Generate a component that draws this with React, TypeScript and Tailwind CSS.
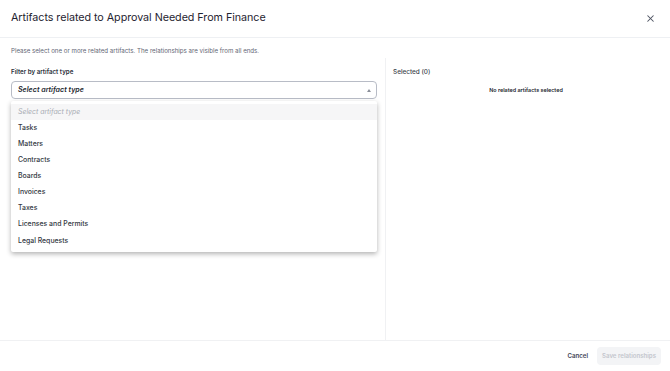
import { X } from 'lucide-react';

const artifactTypes = [
  'Tasks',
  'Matters',
  'Contracts',
  'Boards',
  'Invoices',
  'Taxes',
  'Licenses and Permits',
  'Legal Requests',
];

const App = () => {
  return (
    <div className="h-screen w-full flex flex-col bg-white text-[#1f2937] font-['Inter',sans-serif]">
      {/* Header */}
      <div className="h-[38px] flex items-center justify-between pl-[11px] pr-[14px] border-b border-[#eef0f3]">
        <h1 className="text-[10.75px] font-normal tracking-[-0.05px] text-[#1f2430]">
          Artifacts related to Approval Needed From Finance
        </h1>
        <X className="w-[11px] h-[11px] text-[#4b5160]" strokeWidth={2.2} />
      </div>

      {/* Body */}
      <div className="flex-1 flex flex-col min-h-0">
        <p className="pl-[11px] pt-[9px] pb-[3px] text-[6.15px] leading-[8px] text-[#5f6675]">
          Please select one or more related artifacts. The relationships are visible from all ends.
        </p>

        <div className="flex-1 flex min-h-0">
          {/* Left column */}
          <div className="w-[386px] pl-[11px] pr-[8px] pt-[10px] border-r border-[#f0f1f3]">
            <div className="text-[6.2px] leading-[8px] font-semibold text-[#2b303b] mb-[5px]">
              Filter by artifact type
            </div>
            <div className="relative">
              <div className="h-[18px] flex items-center justify-between pl-[6px] pr-[5px] border border-[#b8bcc6] rounded-[4px]">
                <span className="text-[7.1px] italic font-semibold text-[#23272f]">Select artifact type</span>
                <svg width="4" height="3" viewBox="0 0 4 3">
                  <path d="M0 3 L2 0 L4 3 Z" fill="#8a8f99" />
                </svg>
              </div>

              {/* Dropdown menu */}
              <div className="absolute left-0 right-0 top-[20px] bg-white shadow-[0_2px_5px_rgba(0,0,0,0.3)] rounded-[2px] pt-[3px] pb-[3px] z-10">
                <div className="h-[16px] flex items-center px-[7px] bg-[#f6f6f7] text-[6.9px] italic text-[#a9adb5]">
                  Select artifact type
                </div>
                {artifactTypes.map((t) => (
                  <div key={t} className="h-[16.1px] flex items-center px-[7px] text-[6.9px] font-medium text-[#333842]">
                    {t}
                  </div>
                ))}
              </div>
            </div>
          </div>

          {/* Right column */}
          <div className="flex-1 pl-[7px] pr-[11px] pt-[10px]">
            <div className="text-[6.4px] leading-[8px] font-medium text-[#3a3f4a]">Selected (0)</div>
            <div className="mt-[10px] text-center text-[5.4px] leading-[8px] font-semibold text-[#23272f]">
              No related artifacts selected
            </div>
          </div>
        </div>
      </div>

      {/* Footer */}
      <div className="h-[31px] flex items-center justify-end gap-[9px] pr-[9px] border-t border-[#f0f1f3]">
        <button className="text-[6.1px] font-semibold text-[#3d4254]">Cancel</button>
        <button className="h-[18px] px-[5px] rounded-[4px] bg-[#f3f4f6] text-[6.1px] font-semibold text-[#c3c6cd]">
          Save relationships
        </button>
      </div>
    </div>
  );
};

export default App;
